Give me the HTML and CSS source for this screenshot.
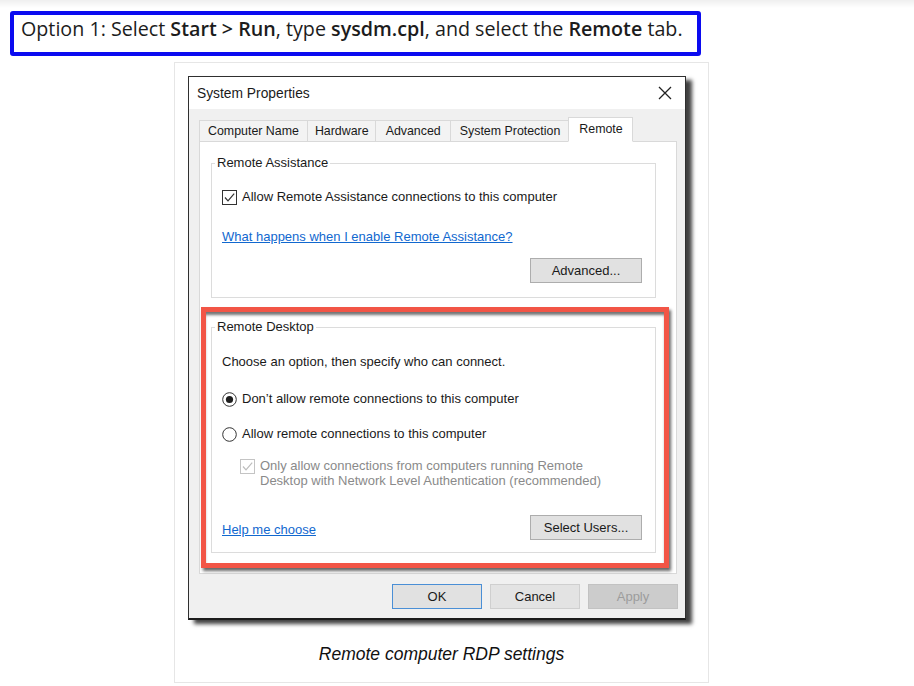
FILE: index.html
```html
<!DOCTYPE html>
<html lang="en">
<head>
<meta charset="utf-8">
<title>Remote computer RDP settings</title>
<link rel="stylesheet" href="styles.css">
</head>
<body>
  <div class="banner">Option 1: Select <b>Start &gt; Run</b>, type <b>sysdm.cpl</b>, and select the <b>Remote</b> tab.</div>

  <figure class="figure">
    <div class="dialog">
      <div class="titlebar">
        <span class="title">System Properties</span>
        <svg class="close" width="14" height="14" viewBox="0 0 14 14"><path d="M1 1 L13 13 M13 1 L1 13" stroke="#222" stroke-width="1.3" fill="none"/></svg>
      </div>
      <div class="dlg-body">
        <div class="tabs">
          <div class="tab tab-name">Computer Name</div>
          <div class="tab tab-hw">Hardware</div>
          <div class="tab tab-adv">Advanced</div>
          <div class="tab tab-sp">System Protection</div>
          <div class="tab active">Remote</div>
        </div>
        <div class="panel">
          <fieldset class="group">
            <legend>Remote Assistance</legend>
            <div class="group-body ra-body">
              <div class="opt-row">
                <svg class="box" width="15" height="15" viewBox="0 0 15 15"><rect x="0.5" y="0.5" width="14" height="14" fill="#fff" stroke="#333"/><path d="M3 7.5 L6 10.8 L12.2 3.6" stroke="#333" stroke-width="1.2" fill="none"/></svg>
                <span>Allow Remote Assistance connections to this computer</span>
              </div>
              <a class="link ra-link">What happens when I enable Remote Assistance?</a>
              <div class="btn-row">
                <button class="btn wide">Advanced...</button>
              </div>
            </div>
          </fieldset>

          <div class="highlight">
            <fieldset class="group">
              <legend>Remote Desktop</legend>
              <div class="group-body rd-body">
                <div class="intro">Choose an option, then specify who can connect.</div>
                <div class="opt-row radio-first">
                  <svg class="box" width="15" height="15" viewBox="0 0 15 15"><circle cx="7.5" cy="7.5" r="6.8" fill="#fff" stroke="#333"/><circle cx="7.5" cy="7.5" r="3.6" fill="#1e1e1e"/></svg>
                  <span>Don’t allow remote connections to this computer</span>
                </div>
                <div class="opt-row radio-second">
                  <svg class="box" width="15" height="15" viewBox="0 0 15 15"><circle cx="7.5" cy="7.5" r="6.8" fill="#fff" stroke="#333"/></svg>
                  <span>Allow remote connections to this computer</span>
                </div>
                <div class="nla">
                  <svg class="box nla-box" width="15" height="15" viewBox="0 0 15 15"><rect x="0.5" y="0.5" width="14" height="14" fill="#fff" stroke="#c4c4c4"/><path d="M3 7.5 L6 10.8 L12.2 3.6" stroke="#bdbdbd" stroke-width="1.2" fill="none"/></svg>
                  <span>Only allow connections from computers running Remote<br>Desktop with Network Level Authentication (recommended)</span>
                </div>
                <div class="foot-row">
                  <a class="link help">Help me choose</a>
                  <button class="btn wide">Select Users...</button>
                </div>
              </div>
            </fieldset>
          </div>
        </div>
        <div class="actions">
          <button class="btn act ok">OK</button>
          <button class="btn act cancel">Cancel</button>
          <button class="btn act apply">Apply</button>
        </div>
      </div>
    </div>
    <figcaption class="caption">Remote computer RDP settings</figcaption>
  </figure>
</body>
</html>
```

FILE: styles.css
```css
html, body {
  margin: 0;
  padding: 0;
}

body {
  background: #ffffff linear-gradient(to bottom, #efefef 0, #ffffff 8px) no-repeat;
  background-size: 100% 8px;
  font-family: "Open Sans", "Liberation Sans", sans-serif;
  color: #1a1a1a;
  width: 914px;
  height: 686px;
  overflow: hidden;
}

.banner {
  margin: 11px 0 0 10px;
  width: 691px;
  height: 45px;
  box-sizing: border-box;
  border: 4px solid #0b0bf0;
  border-radius: 3px;
  padding: 1px 0 0 7px;
  font-size: 19.7px;
  line-height: 26px;
  color: #1c1c1c;
  white-space: nowrap;
}

.banner b {
  font-weight: 600;
}

.figure {
  margin: 6px 0 0 174px;
  width: 535px;
  box-sizing: border-box;
  border: 1px solid #e6e6e6;
  padding: 13px 13px 18px 13px;
}

.dialog {
  width: 498px;
  box-sizing: border-box;
  border: 1px solid #2f2f2f;
  border-bottom: 2px solid #1c1c1c;
  background: #f0f0f0;
  box-shadow: 6px 4px 4px rgba(0, 0, 0, 0.75);
  font-family: "Liberation Sans", Arial, sans-serif;
  font-size: 13px;
  color: #1a1a1a;
}

.titlebar {
  height: 32px;
  background: #ffffff;
  display: flex;
  align-items: center;
  padding-left: 8px;
}

.title {
  font-size: 13.8px;
  color: #1a1a1a;
}

.close {
  margin-left: auto;
  margin-right: 13px;
}

.dlg-body {
  padding: 8px 8px 9px 10px;
}

.tabs {
  display: flex;
  align-items: flex-end;
  height: 25px;
  margin-bottom: -1px;
  position: relative;
  z-index: 1;
  font-size: 12.4px;
}

.tab {
  height: 22px;
  box-sizing: border-box;
  border: 1px solid #d9d9d9;
  background: #f3f3f3;
  padding: 0 8px;
  line-height: 20px;
  margin-right: -1px;
  white-space: nowrap;
  color: #1a1a1a;
}

.tab-hw {
  padding: 0 6px 0 7px;
}

.tab-adv {
  padding: 0 9px 0 10px;
}

.tab-sp {
  padding: 0 8px 0 9px;
}

.tab.active {
  height: 25px;
  background: #ffffff;
  border-bottom-color: #ffffff;
  line-height: 23px;
  padding: 0 9px 0 10px;
  position: relative;
  z-index: 2;
}

.panel {
  width: 478px;
  box-sizing: border-box;
  background: #ffffff;
  border: 1px solid #d9d9d9;
  padding: 14px 0 5px 0;
}

.group {
  margin: 0 0 0 11px;
  width: 445px;
  box-sizing: border-box;
  border: 1px solid #dcdcdc;
  padding: 0 13px 0 3px;
  min-width: 0;
}

.group legend {
  padding: 0 2px;
  margin: 0;
  line-height: 14px;
  color: #1a1a1a;
}

.group-body {
  padding-left: 7px;
}

.ra-body {
  padding-bottom: 14px;
}

.opt-row {
  display: flex;
  align-items: center;
  gap: 5px;
  height: 16px;
  line-height: 16px;
  white-space: nowrap;
}

.ra-body .opt-row {
  margin-top: 19px;
}

.box {
  flex: none;
  display: block;
}

.link {
  display: block;
  color: #1168cf;
  text-decoration: underline;
  line-height: 16px;
  cursor: pointer;
}

.ra-link {
  margin-top: 24px;
}

.btn-row {
  display: flex;
  justify-content: flex-end;
  margin-top: 13px;
}

.btn {
  height: 25px;
  box-sizing: border-box;
  background: #e1e1e1;
  border: 1px solid #adadad;
  font-family: "Liberation Sans", Arial, sans-serif;
  font-size: 13px;
  color: #1a1a1a;
  padding: 0;
  margin: 0;
}

.btn.wide {
  width: 112px;
}

.highlight {
  margin: 9px 0 0 1px;
  width: 468px;
  box-sizing: border-box;
  border: 5px solid #f25546;
  padding: 8px 8px 10px 5px;
  box-shadow: 2px 3px 3px rgba(0, 0, 0, 0.6), inset 0 4px 3px -1px rgba(0, 0, 0, 0.55);
}

.highlight .group {
  margin: 0;
}

.rd-body {
  padding-bottom: 12px;
}

.intro {
  margin-top: 20px;
  line-height: 16px;
}

.radio-first {
  margin-top: 21px;
}

.radio-second {
  margin-top: 19px;
}

.nla {
  margin: 16px 0 0 18px;
  display: flex;
  gap: 5px;
  line-height: 15px;
  color: #8a8a8a;
}

.nla-box {
  margin-top: 1px;
}

.foot-row {
  display: flex;
  justify-content: space-between;
  align-items: flex-end;
  margin-top: 27px;
}

.help {
  margin-bottom: 2px;
}

.actions {
  display: flex;
  justify-content: flex-end;
  gap: 8px;
  margin-top: 10px;
  margin-right: -1px;
}

.btn.act {
  width: 90px;
}

.btn.ok {
  border-color: #4a8fd6;
  background: #e1e1e1;
}

.btn.cancel {
  border-color: #cfcfcf;
  background: #e3e3e3;
}

.btn.apply {
  background: #cccccc;
  border-color: #c2c2c2;
  color: #9c9c9c;
}

.caption {
  margin-top: 24px;
  text-align: center;
  font-family: "Liberation Sans", Arial, sans-serif;
  font-style: italic;
  font-size: 17.5px;
  line-height: 20px;
  color: #111111;
}
```
